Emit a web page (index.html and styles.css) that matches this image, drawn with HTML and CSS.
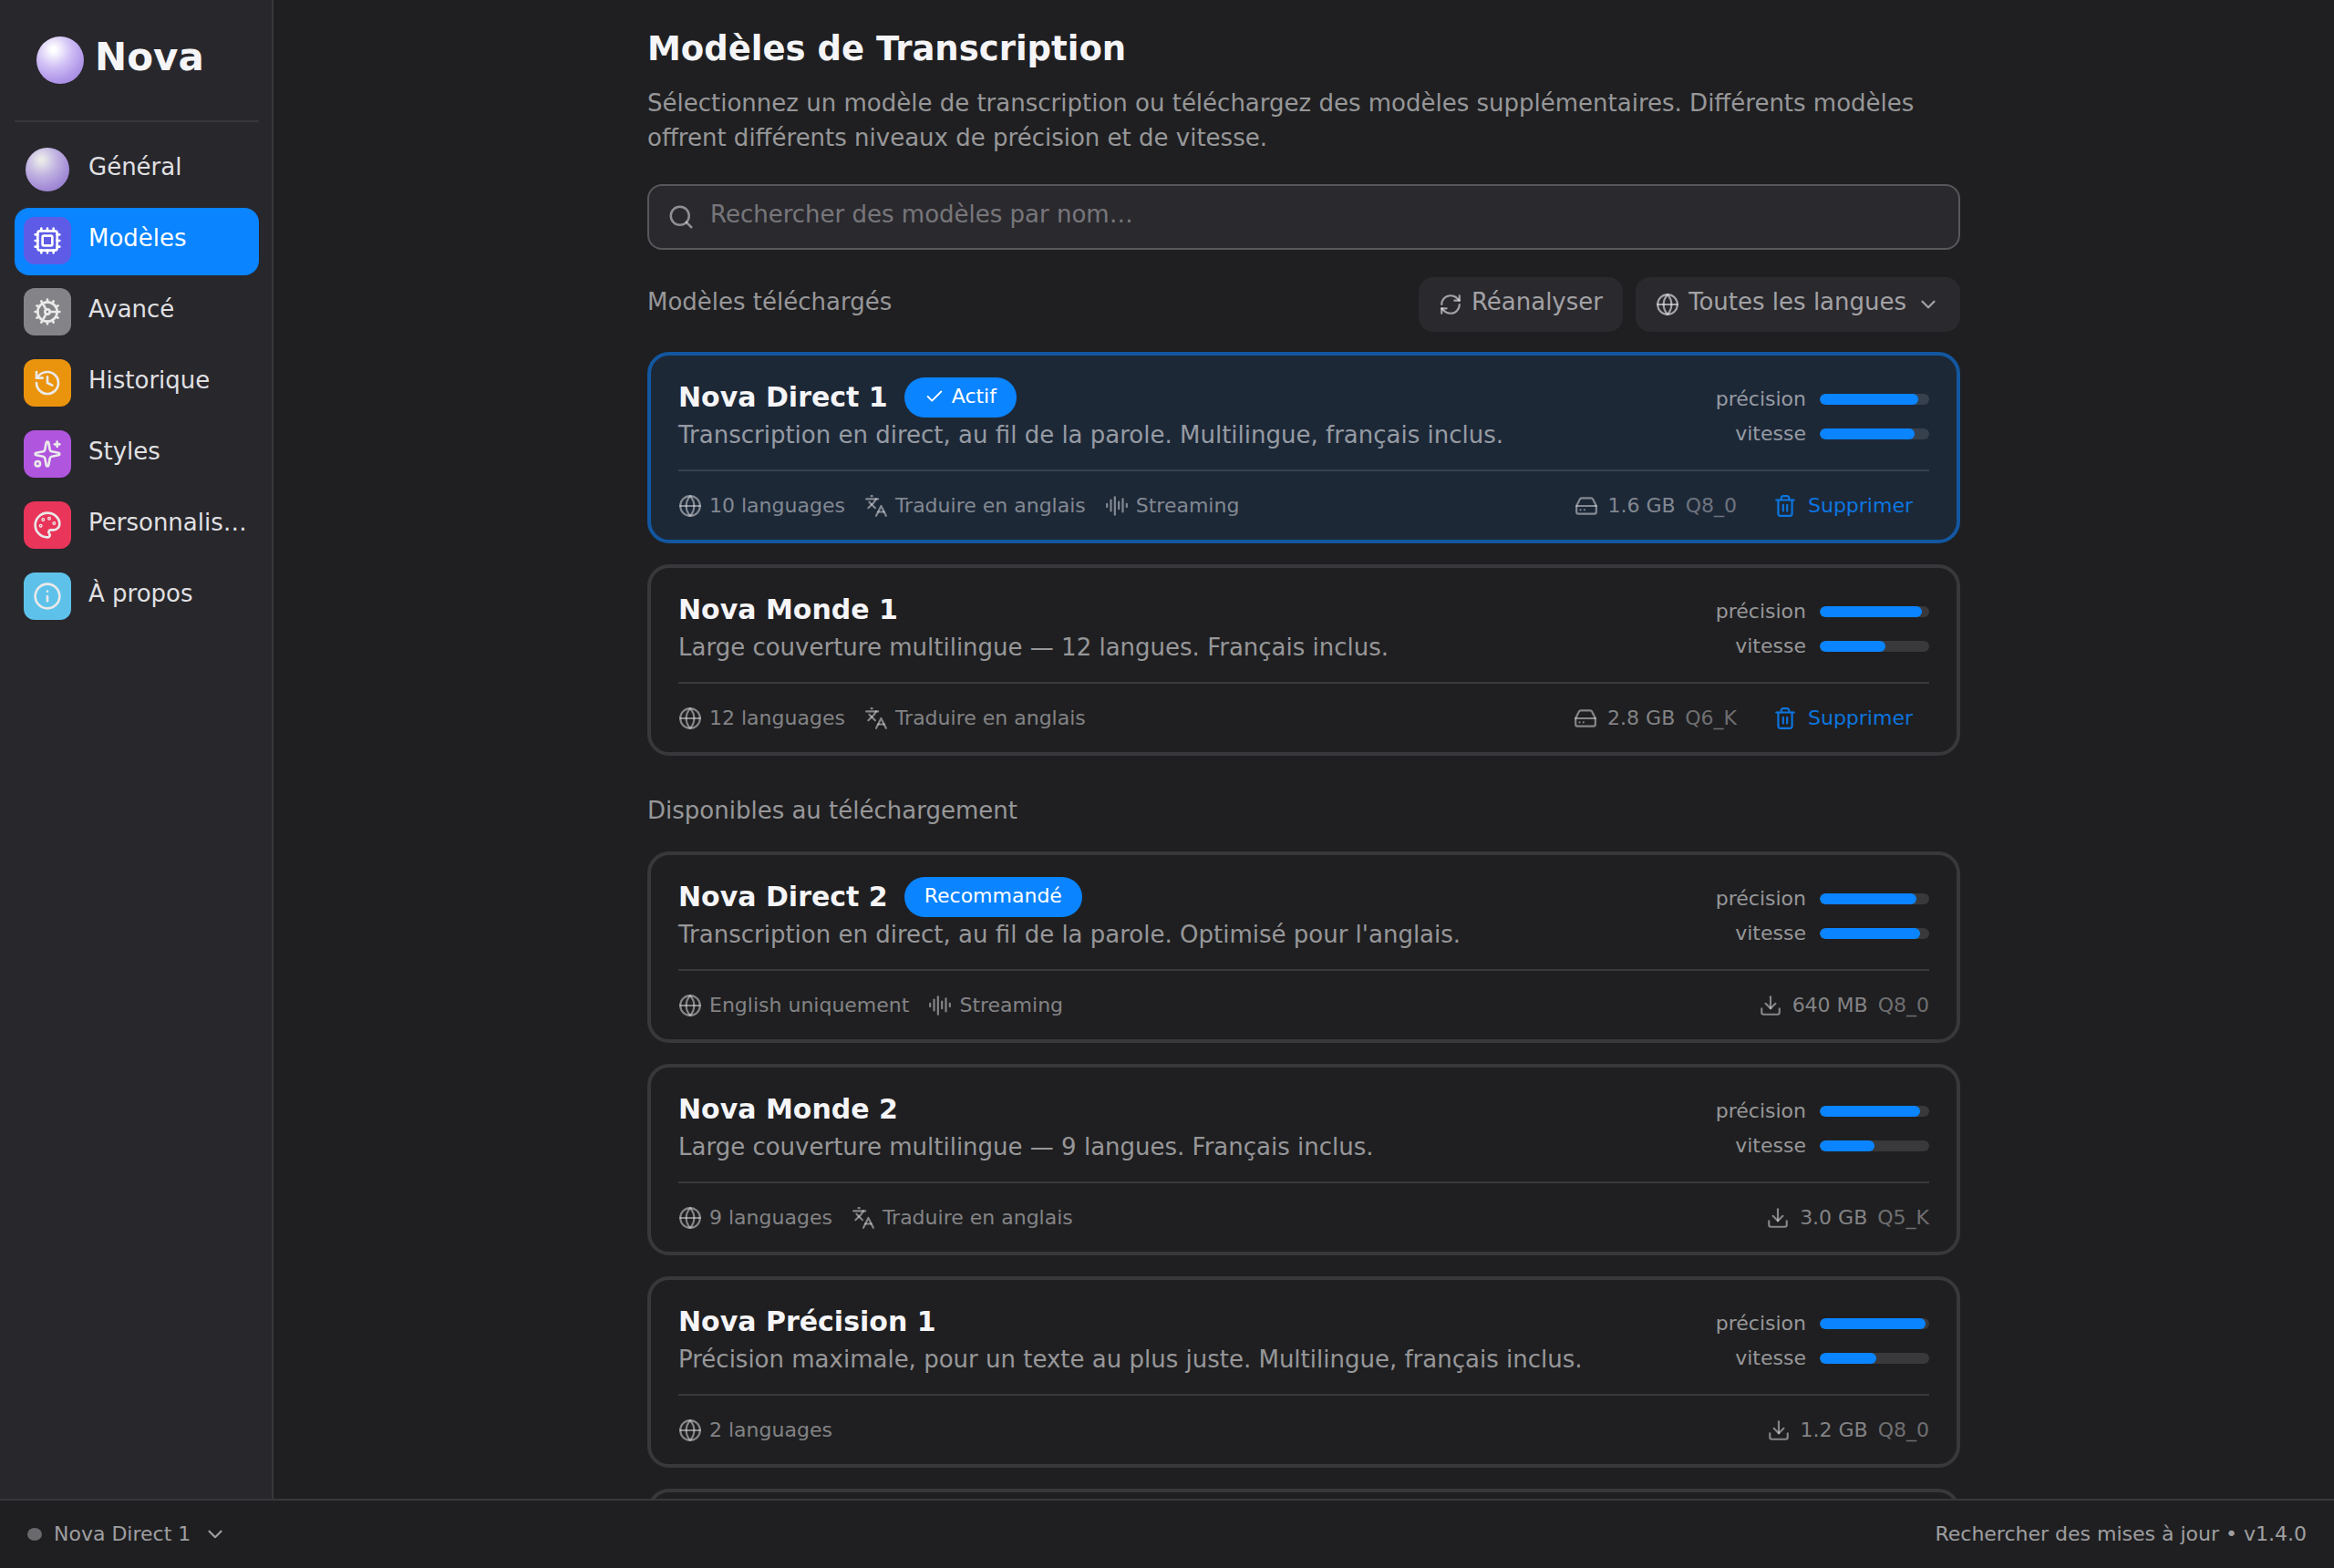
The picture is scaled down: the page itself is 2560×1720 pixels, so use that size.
FILE: index.html
```html
<!DOCTYPE html>
<html lang="fr">
<head>
    <meta charset="UTF-8">
    <meta name="viewport" content="width=device-width, initial-scale=1">
    <title>Nova</title>
    <link rel="stylesheet" href="styles.css">
</head>
<body>
    <!-- icônes partagées -->
    <svg class="sprite" aria-hidden="true">
        <symbol id="globe" viewBox="0 0 24 24"><circle cx="12" cy="12" r="10"/><path d="M12 2a14.5 14.5 0 0 0 0 20 14.5 14.5 0 0 0 0-20"/><path d="M2 12h20"/></symbol>
        <symbol id="languages" viewBox="0 0 24 24"><path d="m5 8 6 6"/><path d="m4 14 6-6 2-3"/><path d="M2 5h12"/><path d="M7 2h1"/><path d="m22 22-5-10-5 10"/><path d="M14 18h6"/></symbol>
        <symbol id="audio" viewBox="0 0 24 24"><path d="M2 10v3"/><path d="M6 6v11"/><path d="M10 3v18"/><path d="M14 8v7"/><path d="M18 5v13"/><path d="M22 10v3"/></symbol>
        <symbol id="drive" viewBox="0 0 24 24"><path d="M22 12H2"/><path d="M5.45 5.11 2 12v6a2 2 0 0 0 2 2h16a2 2 0 0 0 2-2v-6l-3.45-6.89A2 2 0 0 0 16.76 4H7.24a2 2 0 0 0-1.79 1.11z"/><path d="M6 16h.01"/><path d="M10 16h.01"/></symbol>
        <symbol id="trash" viewBox="0 0 24 24"><path d="M3 6h18"/><path d="M19 6v14c0 1-1 2-2 2H7c-1 0-2-1-2-2V6"/><path d="M8 6V4c0-1 1-2 2-2h4c1 0 2 1 2 2v2"/><path d="M10 11v6"/><path d="M14 11v6"/></symbol>
        <symbol id="download" viewBox="0 0 24 24"><path d="M21 15v4a2 2 0 0 1-2 2H5a2 2 0 0 1-2-2v-4"/><path d="m7 10 5 5 5-5"/><path d="M12 15V3"/></symbol>
        <symbol id="chevron" viewBox="0 0 24 24"><path d="m6 9 6 6 6-6"/></symbol>
    </svg>

    <div class="app">
        <div class="body">
            <aside class="sidebar">
                <div class="logo">
                    <span class="orb"></span>
                    <span class="logo-text">Nova</span>
                </div>
                <nav class="nav">
                    <a href="#general" class="nav-item">
                        <span class="nav-icon"><span class="orb orb-small"></span></span>
                        <span class="nav-label">Général</span>
                    </a>
                    <a href="#modeles" class="nav-item active" aria-current="page">
                        <span class="nav-icon indigo"><svg class="icon" viewBox="0 0 24 24"><path d="M12 20v2M12 2v2M17 20v2M17 2v2M2 12h2M2 17h2M2 7h2M20 12h2M20 17h2M20 7h2M7 20v2M7 2v2"/><rect x="4" y="4" width="16" height="16" rx="2"/><rect x="8" y="8" width="8" height="8" rx="1"/></svg></span>
                        <span class="nav-label">Modèles</span>
                    </a>
                    <a href="#avance" class="nav-item">
                        <span class="nav-icon gray"><svg class="icon" viewBox="0 0 24 24"><circle cx="12" cy="12" r="8"/><circle cx="12" cy="12" r="2"/><path d="M12 2v2M12 22v-2M17 20.66l-1-1.73M11 10.27 7 3.34M20.66 17l-1.73-1M3.34 7l1.73 1M14 12h8M2 12h2M20.66 7l-1.73 1M3.34 17l1.73-1M17 3.34l-1 1.73M11 13.73l-4 6.93"/></svg></span>
                        <span class="nav-label">Avancé</span>
                    </a>
                    <a href="#historique" class="nav-item">
                        <span class="nav-icon orange"><svg class="icon" viewBox="0 0 24 24"><path d="M3 12a9 9 0 1 0 9-9 9.75 9.75 0 0 0-6.74 2.74L3 8"/><path d="M3 3v5h5"/><path d="M12 7v5l4 2"/></svg></span>
                        <span class="nav-label">Historique</span>
                    </a>
                    <a href="#styles" class="nav-item">
                        <span class="nav-icon purple"><svg class="icon" viewBox="0 0 24 24"><path d="M11.017 2.814a1 1 0 0 1 1.966 0l1.051 5.558a2 2 0 0 0 1.594 1.594l5.558 1.051a1 1 0 0 1 0 1.966l-5.558 1.051a2 2 0 0 0-1.594 1.594l-1.051 5.558a1 1 0 0 1-1.966 0l-1.051-5.558a2 2 0 0 0-1.594-1.594l-5.558-1.051a1 1 0 0 1 0-1.966l5.558-1.051a2 2 0 0 0 1.594-1.594z"/><path d="M20 2v4"/><path d="M22 4h-4"/><circle cx="4" cy="20" r="2"/></svg></span>
                        <span class="nav-label">Styles</span>
                    </a>
                    <a href="#personnalisation" class="nav-item">
                        <span class="nav-icon pink"><svg class="icon" viewBox="0 0 24 24"><path d="M12 22a1 1 0 0 1 0-20 10 9 0 0 1 10 9 5 5 0 0 1-5 5h-2.25a1.75 1.75 0 0 0-1.4 2.8l.3.4a1.75 1.75 0 0 1-1.4 2.8z"/><circle cx="13.5" cy="6.5" r=".5"/><circle cx="17.5" cy="10.5" r=".5"/><circle cx="6.5" cy="12.5" r=".5"/><circle cx="8.5" cy="7.5" r=".5"/></svg></span>
                        <span class="nav-label">Personnalisation</span>
                    </a>
                    <a href="#apropos" class="nav-item">
                        <span class="nav-icon cyan"><svg class="icon" viewBox="0 0 24 24"><circle cx="12" cy="12" r="10"/><path d="M12 16v-4"/><path d="M12 8h.01"/></svg></span>
                        <span class="nav-label">À propos</span>
                    </a>
                </nav>
            </aside>

            <main class="main">
                <div class="content">
                    <h1>Modèles de Transcription</h1>
                    <p class="intro">Sélectionnez un modèle de transcription ou téléchargez des modèles supplémentaires. Différents modèles offrent différents niveaux de précision et de vitesse.</p>

                    <label class="search">
                        <svg class="icon" viewBox="0 0 24 24"><circle cx="11" cy="11" r="8"/><path d="m21 21-4.3-4.3"/></svg>
                        <input type="search" placeholder="Rechercher des modèles par nom…" aria-label="Rechercher des modèles">
                    </label>

                    <div class="toolbar">
                        <h2>Modèles téléchargés</h2>
                        <button type="button" class="tool">
                            <svg class="icon" viewBox="0 0 24 24"><path d="M3 12a9 9 0 0 1 9-9 9.75 9.75 0 0 1 6.74 2.74L21 8"/><path d="M21 3v5h-5"/><path d="M21 12a9 9 0 0 1-9 9 9.75 9.75 0 0 1-6.74-2.74L3 16"/><path d="M8 16H3v5"/></svg>
                            <span class="tool-label">Réanalyser</span>
                        </button>
                        <div class="tool">
                            <svg class="icon"><use href="#globe"/></svg>
                            <select class="tool-label" aria-label="Langue">
                                <option>Toutes les langues</option>
                            </select>
                            <svg class="icon"><use href="#chevron"/></svg>
                        </div>
                    </div>

                    <section class="models">
                        <article class="card selected">
                            <div class="card-top">
                                <div class="card-info">
                                    <div class="card-title">
                                        <h3>Nova Direct 1</h3>
                                        <span class="badge"><svg class="icon" viewBox="0 0 24 24"><path d="M20 6 9 17l-5-5"/></svg>Actif</span>
                                    </div>
                                    <p>Transcription en direct, au fil de la parole. Multilingue, français inclus.</p>
                                </div>
                                <div class="scores">
                                    <span>précision</span><div class="bar"><div class="fill" style="width: 90%"></div></div>
                                    <span>vitesse</span><div class="bar"><div class="fill" style="width: 87%"></div></div>
                                </div>
                            </div>
                            <div class="card-bottom">
                                <span class="tag"><svg class="icon"><use href="#globe"/></svg>10 languages</span>
                                <span class="tag"><svg class="icon"><use href="#languages"/></svg>Traduire en anglais</span>
                                <span class="tag"><svg class="icon"><use href="#audio"/></svg>Streaming</span>
                                <span class="size"><svg class="icon"><use href="#drive"/></svg>1.6 GB <span class="quant">Q8_0</span></span>
                                <button type="button" class="delete"><svg class="icon"><use href="#trash"/></svg>Supprimer</button>
                            </div>
                        </article>

                        <article class="card">
                            <div class="card-top">
                                <div class="card-info">
                                    <div class="card-title">
                                        <h3>Nova Monde 1</h3>
                                    </div>
                                    <p>Large couverture multilingue — 12 langues. Français inclus.</p>
                                </div>
                                <div class="scores">
                                    <span>précision</span><div class="bar"><div class="fill" style="width: 93%"></div></div>
                                    <span>vitesse</span><div class="bar"><div class="fill" style="width: 60%"></div></div>
                                </div>
                            </div>
                            <div class="card-bottom">
                                <span class="tag"><svg class="icon"><use href="#globe"/></svg>12 languages</span>
                                <span class="tag"><svg class="icon"><use href="#languages"/></svg>Traduire en anglais</span>
                                <span class="size"><svg class="icon"><use href="#drive"/></svg>2.8 GB <span class="quant">Q6_K</span></span>
                                <button type="button" class="delete"><svg class="icon"><use href="#trash"/></svg>Supprimer</button>
                            </div>
                        </article>
                    </section>

                    <h2 class="section-title">Disponibles au téléchargement</h2>

                    <section class="models">
                        <article class="card">
                            <div class="card-top">
                                <div class="card-info">
                                    <div class="card-title">
                                        <h3>Nova Direct 2</h3>
                                        <span class="badge">Recommandé</span>
                                    </div>
                                    <p>Transcription en direct, au fil de la parole. Optimisé pour l'anglais.</p>
                                </div>
                                <div class="scores">
                                    <span>précision</span><div class="bar"><div class="fill" style="width: 88%"></div></div>
                                    <span>vitesse</span><div class="bar"><div class="fill" style="width: 92%"></div></div>
                                </div>
                            </div>
                            <div class="card-bottom">
                                <span class="tag"><svg class="icon"><use href="#globe"/></svg>English uniquement</span>
                                <span class="tag"><svg class="icon"><use href="#audio"/></svg>Streaming</span>
                                <span class="size"><svg class="icon"><use href="#download"/></svg>640 MB <span class="quant">Q8_0</span></span>
                            </div>
                        </article>

                        <article class="card">
                            <div class="card-top">
                                <div class="card-info">
                                    <div class="card-title">
                                        <h3>Nova Monde 2</h3>
                                    </div>
                                    <p>Large couverture multilingue — 9 langues. Français inclus.</p>
                                </div>
                                <div class="scores">
                                    <span>précision</span><div class="bar"><div class="fill" style="width: 92%"></div></div>
                                    <span>vitesse</span><div class="bar"><div class="fill" style="width: 50%"></div></div>
                                </div>
                            </div>
                            <div class="card-bottom">
                                <span class="tag"><svg class="icon"><use href="#globe"/></svg>9 languages</span>
                                <span class="tag"><svg class="icon"><use href="#languages"/></svg>Traduire en anglais</span>
                                <span class="size"><svg class="icon"><use href="#download"/></svg>3.0 GB <span class="quant">Q5_K</span></span>
                            </div>
                        </article>

                        <article class="card">
                            <div class="card-top">
                                <div class="card-info">
                                    <div class="card-title">
                                        <h3>Nova Précision 1</h3>
                                    </div>
                                    <p>Précision maximale, pour un texte au plus juste. Multilingue, français inclus.</p>
                                </div>
                                <div class="scores">
                                    <span>précision</span><div class="bar"><div class="fill" style="width: 97%"></div></div>
                                    <span>vitesse</span><div class="bar"><div class="fill" style="width: 52%"></div></div>
                                </div>
                            </div>
                            <div class="card-bottom">
                                <span class="tag"><svg class="icon"><use href="#globe"/></svg>2 languages</span>
                                <span class="size"><svg class="icon"><use href="#download"/></svg>1.2 GB <span class="quant">Q8_0</span></span>
                            </div>
                        </article>

                        <article class="card">
                            <div class="card-top"></div>
                        </article>
                    </section>
                </div>
            </main>
        </div>

        <footer class="footer">
            <div class="current-model">
                <span class="dot"></span>
                <select aria-label="Modèle actif">
                    <option>Nova Direct 1</option>
                </select>
                <svg class="icon"><use href="#chevron"/></svg>
            </div>
            <div class="version"><a href="#maj">Rechercher des mises à jour</a> • v1.4.0</div>
        </footer>
    </div>
</body>
</html>
```

FILE: styles.css
```css
* {
    box-sizing: border-box;
}

body {
    margin: 0;
    background-color: #1f1f21;
    color: #f5f5f7;
    font-family: "DejaVu Sans", sans-serif;
    font-size: 26px;
    line-height: 38px;
}

h1, h2, h3, p {
    margin: 0;
}

a {
    color: inherit;
    text-decoration: none;
}

button, input, select {
    appearance: none;
    border: 0;
    padding: 0;
    background: none;
    color: inherit;
    font: inherit;
}

.sprite {
    position: absolute;
    width: 0;
    height: 0;
}

.icon {
    flex: none;
    width: 26px;
    height: 26px;
    fill: none;
    stroke: currentColor;
    stroke-width: 2;
    stroke-linecap: round;
    stroke-linejoin: round;
}

.app {
    display: flex;
    flex-direction: column;
    height: 100vh;
}

.body {
    display: flex;
    flex: 1;
    min-height: 0;
}

/* barre latérale */
.sidebar {
    flex: none;
    width: 300px;
    padding: 0 14px 0 16px;
    background-color: #28272c;
    border-right: 2px solid #38383c;
}

.logo {
    display: flex;
    align-items: center;
    gap: 12px;
    padding: 40px 24px;
    border-bottom: 2px solid #38383c;
}

.logo-text {
    padding-bottom: 6px;
    font-size: 42px;
    font-weight: bold;
    line-height: 46px;
}

.orb {
    width: 52px;
    height: 52px;
    border-radius: 50%;
    background: radial-gradient(circle at 36% 28%, #fff 0%, #fff 5%, #d0c0f5 38%, #b49bea 65%, #9376d8 100%);
}

.orb-small {
    width: 48px;
    height: 48px;
}

.nav {
    display: flex;
    flex-direction: column;
    gap: 4px;
    padding-top: 16px;
}

.nav-item {
    display: flex;
    align-items: center;
    gap: 19px;
    padding: 10px 10px 12px;
    border-radius: 16px;
}

.nav-item > * {
    opacity: 0.9;
}

.nav-item.active {
    background-color: #0a84ff;
    color: #fff;
}

.nav-item.active > * {
    opacity: 1;
}

.nav-icon {
    display: flex;
    flex: none;
    align-items: center;
    justify-content: center;
    width: 52px;
    height: 52px;
    border-radius: 12px;
    color: #fff;
}

.nav-icon .icon {
    width: 32px;
    height: 32px;
}

.nav-label {
    padding-bottom: 6px;
    overflow: hidden;
    text-overflow: ellipsis;
    white-space: nowrap;
}

.indigo { background-color: #5e5ce6; }
.gray { background-color: #8e8e93; }
.orange { background-color: #ff9f0a; }
.purple { background-color: #bf5af2; }
.pink { background-color: #ff375f; }
.cyan { background-color: #64d2ff; }

/* contenu */
.main {
    flex: 1;
    overflow-y: auto;
    scrollbar-width: none;
}

.content {
    max-width: 1500px;
    margin: 0 auto;
    padding: 32px 30px;
}

h1 {
    margin-bottom: 18px;
    font-size: 37px;
    line-height: 44px;
}

h2 {
    color: rgba(245, 245, 247, 0.57);
    font-size: 26px;
    font-weight: normal;
}

.intro {
    color: rgba(245, 245, 247, 0.57);
}

.search {
    display: flex;
    align-items: center;
    gap: 17px;
    height: 72px;
    margin-top: 32px;
    padding: 0 20px;
    background-color: #2a292e;
    border: 2px solid #58585c;
    border-radius: 16px;
    color: rgba(245, 245, 247, 0.5);
}

.search .icon {
    width: 30px;
    height: 30px;
}

.search input {
    flex: 1;
    padding-bottom: 6px;
    color: #f5f5f7;
    outline: none;
}

.search input::placeholder {
    color: rgba(245, 245, 247, 0.4);
}

.toolbar {
    display: flex;
    align-items: center;
    gap: 14px;
    margin: 30px 0 22px;
}

.toolbar h2 {
    flex: 1;
    padding-bottom: 6px;
}

.tool {
    display: flex;
    align-items: center;
    gap: 10px;
    height: 60px;
    padding: 0 22px;
    background-color: #2a292e;
    border-radius: 16px;
    color: rgba(245, 245, 247, 0.6);
}

.tool-label {
    padding-bottom: 6px;
}

.section-title {
    margin: 41px 0 26px;
}

.models {
    display: flex;
    flex-direction: column;
    gap: 23px;
}

.card {
    padding: 24px 30px 18px;
    border: 4px solid #38383c;
    border-radius: 24px;
}

.card.selected {
    background-color: #1d2837;
    border-color: #1257a0;
}

.card-top {
    display: flex;
    justify-content: space-between;
    padding-bottom: 19px;
    border-bottom: 2px solid rgba(245, 245, 247, 0.12);
}

.card-title {
    display: flex;
    align-items: center;
    gap: 18px;
    height: 44px;
}

h3 {
    font-size: 30px;
}

.card-info p {
    color: rgba(245, 245, 247, 0.57);
}

.badge {
    display: flex;
    align-items: center;
    gap: 8px;
    padding: 2px 22px 4px;
    background-color: #0a84ff;
    border-radius: 22px;
    color: #fff;
    font-size: 22px;
}

.badge .icon {
    width: 22px;
    height: 22px;
}

.scores {
    display: grid;
    grid-template-columns: auto 120px;
    column-gap: 15px;
    align-items: center;
    align-content: start;
    padding-top: 5px;
    color: rgba(245, 245, 247, 0.57);
    font-size: 22px;
    text-align: right;
}

.bar {
    height: 12px;
    overflow: hidden;
    background-color: rgba(245, 245, 247, 0.12);
    border-radius: 6px;
}

.fill {
    height: 100%;
    background-color: #0a84ff;
    border-radius: 6px;
}

.card-bottom {
    display: flex;
    align-items: center;
    gap: 21px;
    padding-top: 19px;
    color: rgba(245, 245, 247, 0.48);
    font-size: 22px;
}

.tag, .size, .delete {
    display: flex;
    align-items: center;
    gap: 8px;
}

.size {
    gap: 11px;
    margin-left: auto;
}

.quant {
    color: rgba(245, 245, 247, 0.38);
}

.delete {
    gap: 12px;
    padding: 0 18px 0 19px;
    color: #0a84ff;
    opacity: 0.85;
}

/* barre d'état */
.footer {
    display: flex;
    align-items: center;
    justify-content: space-between;
    padding: 18px 30px;
    border-top: 2px solid #38383c;
    color: rgba(245, 245, 247, 0.6);
    font-size: 22px;
}

.current-model {
    display: flex;
    align-items: center;
    gap: 13px;
}

.dot {
    width: 16px;
    height: 14px;
    border-radius: 50%;
    background-color: #6a6a6e;
}
```
